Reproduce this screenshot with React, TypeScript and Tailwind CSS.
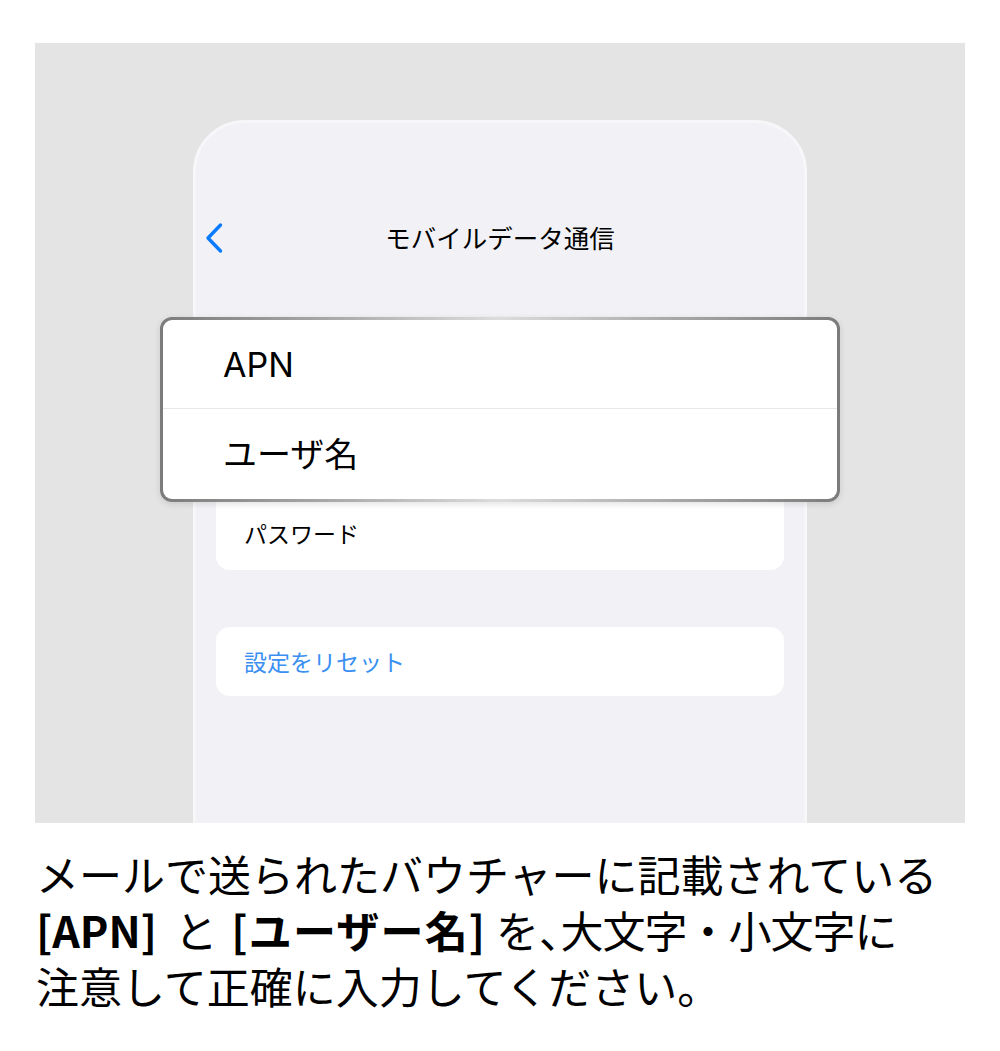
const jp = { fontFamily: '"Noto Sans CJK JP", "Noto Sans", sans-serif' };
const ui = { fontFamily: 'Inter, "Noto Sans CJK JP", sans-serif' };

/*--------- one row of the settings list ----------*/
function Row({ label, last }: { label: string; last?: boolean }) {
  return (
    <div className={`h-[70px] flex items-center pl-[28px] ${last ? "" : "border-b border-[#e6e6ea]"}`}>
      <span className="text-[23px] text-black" style={ui}>
        {label}
      </span>
    </div>
  );
}

function BackChevron() {
  return (
    <svg className="absolute left-[9px] top-[10px]" width="20" height="32" viewBox="0 0 20 32" fill="none">
      <polyline
        points="15.5,3 3,16 15.5,29"
        stroke="#0a7aff"
        strokeWidth="3.4"
        strokeLinecap="round"
        strokeLinejoin="round"
      />
    </svg>
  );
}

export default function App() {
  return (
    <div className="w-[1000px] h-[1051px] bg-white overflow-hidden">
      {/*--------- grey stage with the phone ----------*/}
      <div className="pt-[43px] px-[35px]">
        <div className="relative h-[780px] bg-[#e4e4e4] pt-[77px] overflow-hidden">
          <div className="mx-auto w-[614px] h-[710px] rounded-t-[52px] border-[3px] border-[#f7f7f9] bg-[#f2f2f6] pt-[89px]">
            {/* nav bar */}
            <div className="relative h-[50px] flex items-center justify-center">
              <BackChevron />
              <span className="text-[25.5px] text-black" style={jp}>
                モバイルデータ通信
              </span>
            </div>

            {/* APN settings */}
            <div className="mt-[98px] mx-[20px] bg-white rounded-[14px] overflow-hidden">
              <Row label="APN" />
              <Row label="ユーザ名" />
              <Row label="パスワード" last />
            </div>

            {/* reset */}
            <div className="mt-[57px] mx-[20px] h-[69px] bg-white rounded-[14px] flex items-center pl-[28px]">
              <span className="text-[23px] text-[#3a8ff2]" style={jp}>
                設定をリセット
              </span>
            </div>
          </div>

          {/*--------- magnified callout over the first two rows ----------*/}
          <div className="absolute left-[125px] top-[274px] w-[680px] h-[185px] rounded-[12px] p-[3px] bg-[linear-gradient(90deg,#7b7b7b_0%,#a9a9a9_25%,#dcdcdc_50%,#a9a9a9_75%,#7b7b7b_100%)] shadow-[0_2px_6px_rgba(0,0,0,0.12)]">
            <div className="w-full h-full bg-white rounded-[9px] flex flex-col">
              <div className="h-[89px] flex items-center pl-[60px] border-b border-[#e8e8ea]">
                <span className="text-[34px] text-black" style={ui}>
                  APN
                </span>
              </div>
              <div className="flex-1 flex items-center pl-[60px]">
                <span className="text-[34px] text-black" style={ui}>
                  ユーザ名
                </span>
              </div>
            </div>
          </div>
        </div>
      </div>

      {/*--------- caption ----------*/}
      <p className="mt-[22px] pl-[36px] text-[43px] leading-[56px] text-black whitespace-nowrap" style={jp}>
        メールで送られたバウチャーに記載されている
        <br />
        <b className="font-bold">[APN]</b> <span className="ml-[8px]">と</span>{" "}
        <b className="font-bold ml-[4px] tracking-[1.2px]">[ユーザー名]</b> を
        <span className="[font-feature-settings:'halt']">、</span>
        <span className="tracking-[-1px]">大文字・小文字に</span>
        <br />
        注意して正確に入力してください。
      </p>
    </div>
  );
}
